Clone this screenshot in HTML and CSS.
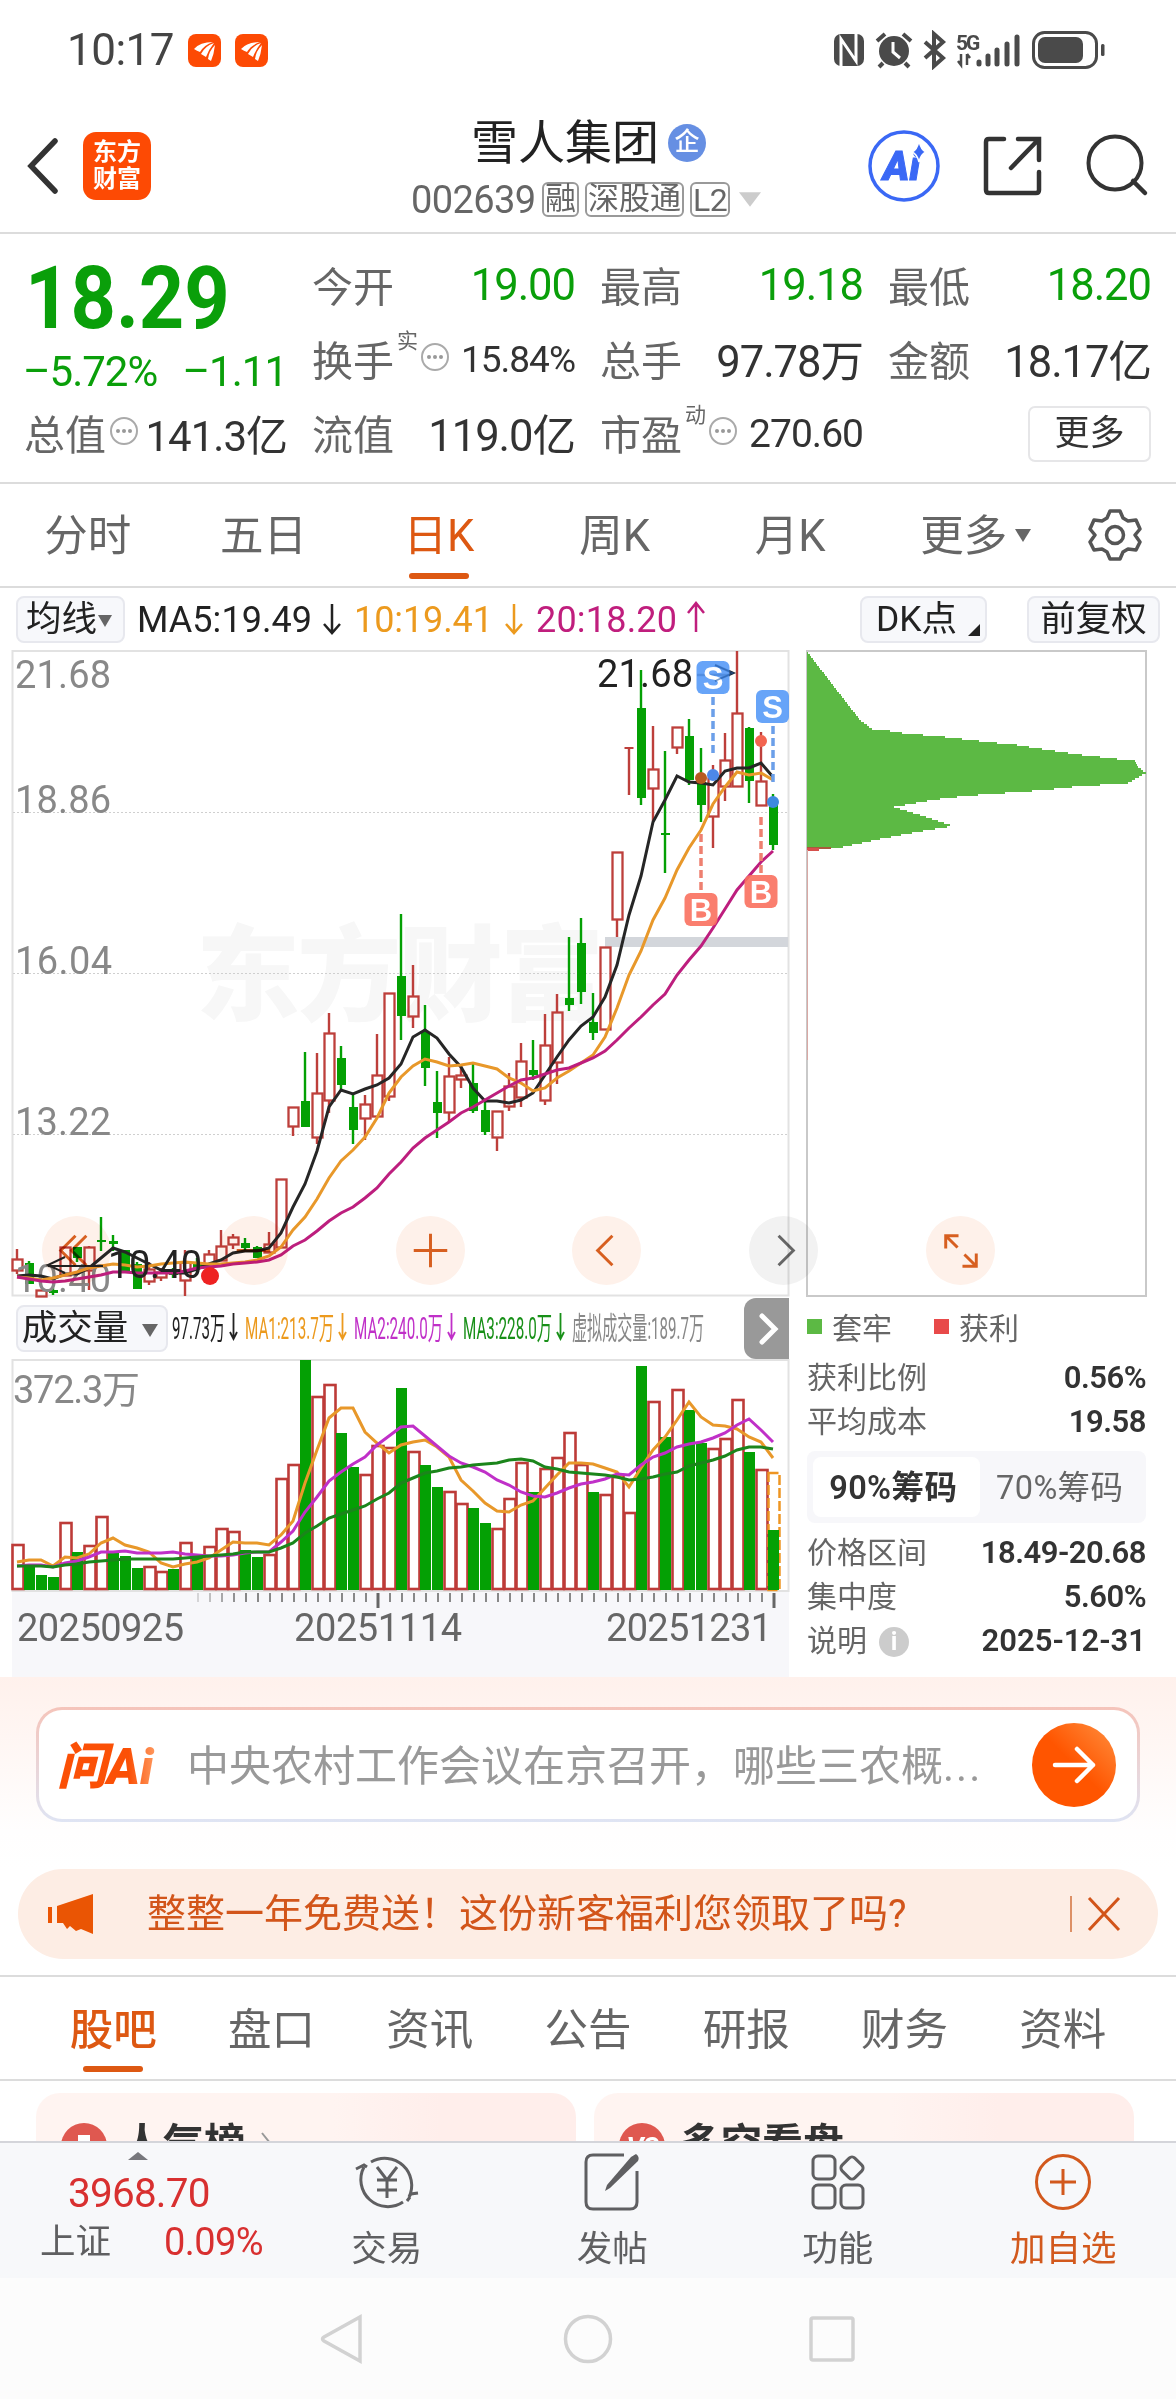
FILE: index.html
```html
<!DOCTYPE html>
<html lang="zh-CN">
<head>
    <meta charset="UTF-8">
    <meta name="viewport" content="width=device-width, initial-scale=1.0">
    <title>雪人集团 002639</title>
    <link rel="stylesheet" href="styles.css">
</head>
<body>
<div class="phone">
    <div class="status-bar">
        <span class="clock">10:17</span>
        <svg class="app-badge" viewBox="0 0 33 33"><rect width="33" height="33" rx="8" fill="#fd4a04"/><path d="M6 15Q12 8 25 8Q16 11 12 18Q9 17 6 15zM13 20Q17 12 26 9Q21 15 18 23zM20 25Q21 17 27 11Q26 20 23 27z" fill="#fff"/></svg>
        <svg class="app-badge" viewBox="0 0 33 33"><rect width="33" height="33" rx="8" fill="#fd4a04"/><path d="M6 15Q12 8 25 8Q16 11 12 18Q9 17 6 15zM13 20Q17 12 26 9Q21 15 18 23zM20 25Q21 17 27 11Q26 20 23 27z" fill="#fff"/></svg>
        <svg class="status-icons" viewBox="0 0 274 40">
            <g fill="#4a4a4a">
                <rect x="3" y="4" width="30" height="32" rx="7"/>
                <path d="M10 36V9L25 31V4" fill="none" stroke="#fff" stroke-width="3"/>
                <circle cx="63" cy="21" r="15"/>
                <path d="M46 11L54 4M80 11L72 4M52 33L48 37M74 33L78 37" stroke="#4a4a4a" stroke-width="4"/>
                <path d="M62 12V22L69 28" fill="none" stroke="#fff" stroke-width="3"/>
                <path d="M94 12L112 28L103 36V4L112 12L94 28" fill="none" stroke="#4a4a4a" stroke-width="4"/>
                <text x="125" y="20" class="net">5G</text>
                <path d="M130 24V35L127 31M136 24V35M136 24L139 28" fill="none" stroke="#4a4a4a" stroke-width="2.5"/>
                <path d="M148 34V32M157 34V26M166 34V20M176 34V14M186 34V7" stroke="#4a4a4a" stroke-width="5" stroke-linecap="round"/>
                <rect x="202.500" y="2.500" width="63" height="35" rx="11" fill="none" stroke="#4a4a4a" stroke-width="3"/>
                <rect x="207" y="7" width="45" height="26" rx="7"/>
                <rect x="270" y="14" width="3.500" height="12" rx="1.500"/>
            </g>
        </svg>
    </div>

    <header class="top">
        <svg class="back" viewBox="0 0 36 60"><path d="M30 5L6 30L30 55" fill="none" stroke="#333" stroke-width="5.500" stroke-linecap="round"/></svg>
        <div class="logo">东方<br>财富</div>
        <div class="stock">
            <div class="stock-name">雪人集团<i class="ent">企</i></div>
            <div class="stock-code"><span class="code">002639</span><b>融</b><b>深股通</b><b>L2</b><svg viewBox="0 0 24 16"><path d="M0 0H24L12 16z" fill="#ccc"/></svg></div>
        </div>
        <svg class="top-icons" viewBox="0 0 290 80">
            <circle cx="37" cy="40" r="34" fill="#fff" stroke="#3a68f5" stroke-width="3.500"/>
            <text x="16" y="54" class="ai-text">Ai</text>
            <path d="M52 15Q54 24 59 26Q54 28 52 36Q50 28 45 26Q50 24 52 15z" fill="#3a68f5" stroke="#fff" stroke-width="1.500"/>
            <path d="M137 13H122Q119 13 119 16V64Q119 67 122 67H169Q172 67 172 64V46M151 13H172V34M171 14L144 42" fill="none" stroke="#333" stroke-width="4.500" stroke-linecap="round"/>
            <circle cx="248" cy="37" r="26.500" fill="none" stroke="#333" stroke-width="4"/>
            <path d="M266 55L278 67" stroke="#333" stroke-width="4.500" stroke-linecap="round"/>
        </svg>
    </header>

    <section class="quote">
        <div class="price">
            <div class="last"><span>18.29</span></div>
            <div class="chg"><span>–5.72%</span><span>–1.11</span></div>
        </div>
        <div class="cell"><label>今开</label><em class="green">19.00</em></div>
        <div class="cell"><label>最高</label><em class="green">19.18</em></div>
        <div class="cell"><label>最低</label><em class="green">18.20</em></div>
        <div class="cell"><label>换手<sup>实</sup></label><svg class="dots after-sup" viewBox="0 0 30 30"><use href="#dots"/></svg><em class="small">15.84%</em></div>
        <div class="cell"><label>总手</label><em>97.78万</em></div>
        <div class="cell"><label>金额</label><em>18.17亿</em></div>
        <div class="cell"><label>总值</label><svg class="dots" viewBox="0 0 30 30"><use href="#dots"/></svg><em class="mid">141.3亿</em></div>
        <div class="cell"><label>流值</label><em>119.0亿</em></div>
        <div class="cell"><label>市盈<sup>动</sup></label><svg class="dots after-sup" viewBox="0 0 30 30"><use href="#dots"/></svg><em class="mid2">270.60</em></div>
        <div class="cell"><a class="more">更多</a></div>
        <svg class="defs" width="0" height="0">
            <g id="dots"><circle cx="15" cy="15" r="13" fill="none" stroke="#aaa" stroke-width="2"/><circle cx="9" cy="15" r="2" fill="#999"/><circle cx="15" cy="15" r="2" fill="#999"/><circle cx="21" cy="15" r="2" fill="#999"/></g>
        </svg>
    </section>

    <nav class="period">
        <a>分时</a><a>五日</a><a class="on">日K</a><a>周K</a><a>月K</a><a>更多<i class="caret"></i></a>
        <div class="gear">
            <svg viewBox="0 0 54 54"><path d="M22 3H32L35 10L40 13L48 12L52 21L47 27L52 34L48 42L40 41L35 44L32 51H22L19 44L14 41L6 42L2 34L7 27L2 21L6 12L14 13L19 10z" fill="none" stroke="#555" stroke-width="3.500" stroke-linejoin="round"/><circle cx="27" cy="27" r="8.500" fill="none" stroke="#555" stroke-width="3.500"/></svg>
        </div>
    </nav>

    <div class="ma-row">
        <a class="chip c1">均线<i class="caret"></i></a>
        <svg class="ma-text" viewBox="0 0 600 60">
            <text x="1" y="43" textLength="175" fill="#222">MA5:19.49</text><path d="M196 15V43M188 35L196 44L204 35" stroke="#222"/>
            <text x="218" y="43" textLength="139" fill="#ec9a1e">10:19.41</text><path d="M378 15V43M370 35L378 44L386 35" stroke="#ec9a1e"/>
            <text x="400" y="43" textLength="141" fill="#c01e7d">20:18.20</text><path d="M560 15V43M552 24L560 14L568 24" stroke="#c01e7d"/>
        </svg>
        <a class="chip c2">DK点<i class="corner"></i></a>
        <a class="chip c3">前复权</a>
    </div>

    <section class="charts">
        <div class="left">
            <svg id="kline" viewBox="0 650 800 648"></svg>
            <div class="vol-head">
                <a class="chip c4">成交量<i class="caret"></i></a>
                <svg class="vol-text" viewBox="168 0 576 61">
                    <text x="172" y="41" textLength="53" lengthAdjust="spacingAndGlyphs" fill="#222">97.73万</text>
                    <text x="245" y="41" textLength="89" lengthAdjust="spacingAndGlyphs" fill="#ec9a1e">MA1:213.7万</text>
                    <text x="354" y="41" textLength="89" lengthAdjust="spacingAndGlyphs" fill="#c030c8">MA2:240.0万</text>
                    <text x="463" y="41" textLength="89" lengthAdjust="spacingAndGlyphs" fill="#189018">MA3:228.0万</text>
                    <text x="572" y="41" textLength="132" lengthAdjust="spacingAndGlyphs" fill="#888">虚拟成交量:189.7万</text>
                    <path d="M233.500 15V40M230 34L233.500 41L237 34" stroke="#222"/>
                    <path d="M342.500 15V40M339 34L342.500 41L346 34" stroke="#ec9a1e"/>
                    <path d="M451.500 15V40M448 34L451.500 41L455 34" stroke="#c030c8"/>
                    <path d="M560.500 15V40M557 34L560.500 41L564 34" stroke="#189018"/>
                </svg>
                <a class="next"><svg viewBox="0 0 45 61"><path d="M18 18L31 31L18 44" fill="none" stroke="#fff" stroke-width="5" stroke-linecap="round"/></svg></a>
            </div>
            <svg id="volume" viewBox="0 1359 800 318"></svg>
        </div>
        <aside class="chips">
            <svg id="profile" viewBox="800 650 376 648"></svg>
            <div class="chips-info">
                <div class="legend"><i class="sq g"></i>套牢<i class="sq r"></i>获利</div>
                <div class="row"><span>获利比例</span><b>0.56%</b></div>
                <div class="row"><span>平均成本</span><b>19.58</b></div>
                <div class="toggle"><a class="on">90%筹码</a><a>70%筹码</a></div>
                <div class="row"><span>价格区间</span><b>18.49-20.68</b></div>
                <div class="row"><span>集中度</span><b>5.60%</b></div>
                <div class="row"><span>说明<i class="info">i</i></span><b class="date">2025-12-31</b></div>
            </div>
        </aside>
        <div class="tools">
            <a><svg viewBox="0 0 70 70"><path d="M34 20L19 35L34 50M45 20L30 35L45 50"/></svg></a>
            <a><svg viewBox="0 0 70 70"><path d="M18 35H52"/></svg></a>
            <a><svg viewBox="0 0 70 70"><path d="M18 35H52M35 18V52"/></svg></a>
            <a><svg viewBox="0 0 70 70"><path d="M41 20L26 35L41 50"/></svg></a>
            <a class="off"><svg viewBox="0 0 70 70"><path d="M30 20L45 35L30 50"/></svg></a>
            <a><svg viewBox="0 0 70 70"><path d="M33 20H20V33M20 20L32 32M51 38V51H37M39 39L51 51" stroke-width="3.500"/></svg></a>
        </div>
    </section>

    <section class="ask">
        <div class="ask-box">
            <div class="ask-logo"><span>问</span>Ai</div>
            <p>中央农村工作会议在京召开，哪些三农概<span class="more-dots">...</span></p>
            <a class="go"><svg viewBox="0 0 84 84"><path d="M23 42H61M45 26L61 42L45 58" fill="none" stroke="#fff" stroke-width="4.500" stroke-linecap="round" stroke-linejoin="round"/></svg></a>
        </div>
    </section>

    <div class="banner">
        <svg class="horn" viewBox="0 0 48 42"><path d="M0 14H4V30H0zM9 13L45 1V41L33 36L28 38L22 33L19 36L15 30H9z" fill="#ea5504"/></svg>
        <p>整整一年免费送！这份新客福利您领取了吗?</p>
        <svg class="close" viewBox="0 0 54 40"><path d="M1 2V38" stroke="#d2703c" stroke-width="1.500"/><path d="M19 4L49 36M49 4L19 36" stroke="#d2551a" stroke-width="3"/></svg>
    </div>

    <nav class="tabs">
        <a class="on">股吧</a><a>盘口</a><a>资讯</a><a>公告</a><a>研报</a><a>财务</a><a>资料</a>
    </nav>

    <section class="cards">
        <div class="card"><i class="round hot"></i>人气榜<svg viewBox="0 0 12 30"><path d="M2 5L10 15L2 25" fill="none" stroke="#999" stroke-width="2"/></svg></div>
        <div class="card"><i class="round">VS</i>多空看盘</div>
    </section>

    <footer class="bottom">
        <div class="index">
            <i class="up"></i>
            <div class="idx-val">3968.70</div>
            <div class="idx-row"><span>上证</span><b>0.09%</b></div>
        </div>
        <a><svg viewBox="0 0 66 62"><path d="M17 11A27 27 0 0 1 55 46M49 51A27 27 0 0 1 10 16M2 18L10 14L13 16M55 46L57 43L64 42M53 50L56 46"/><path d="M23 16L33 29L43 16M33 29V47M23 29H43M23 39H43"/></svg>交易</a>
        <a><svg viewBox="0 0 66 62"><path d="M45 4H14Q7 4 7 11V51Q7 58 14 58H51Q58 58 58 51V20"/><path d="M57 3Q61 6 59 10L31 37L26 40L28 34L52 6z" fill="#5f5f61" stroke="none"/></svg>发帖</a>
        <a><svg viewBox="0 0 66 62"><rect x="8" y="5" width="22" height="23" rx="5"/><rect x="8" y="34" width="22" height="23" rx="5"/><rect x="36" y="34" width="22" height="23" rx="5"/><rect x="38" y="8" width="18" height="18" rx="4" transform="rotate(45 47 17)"/></svg>功能</a>
        <a class="add"><svg viewBox="0 0 66 62"><circle cx="33" cy="31" r="26.500"/><path d="M20 31H46M33 18V44"/></svg>加自选</a>
    </footer>

    <div class="sys-nav">
        <svg viewBox="0 0 50 60"><path d="M41 8V52L5 32Q2 30 5 28z"/></svg>
        <svg viewBox="0 0 50 60"><circle cx="25" cy="30" r="22.500"/></svg>
        <svg viewBox="0 0 50 60"><rect x="4" y="9" width="42" height="42" rx="2"/></svg>
    </div>
</div>
<script src="chart.js"></script>
</body>
</html>
```
FILE: styles.css
```css
* {
    box-sizing: border-box;
}
body {
    margin: 0;
    background: #fff;
    color: #333;
    font-family: Roboto, "Noto Sans CJK SC", sans-serif;
}
svg {
    display: block;
    flex: none;
}
i, em {
    font-style: normal;
}
p {
    margin: 0;
}
.phone {
    width: 1176px;
    height: 2400px;
    overflow: hidden;
    display: flex;
    flex-direction: column;
}
.phone > * {
    flex: none;
}

/* status bar */
.status-bar {
    height: 100px;
    padding: 0 71px 0 67px;
    display: flex;
    align-items: center;
}
.clock {
    font-size: 44px;
    letter-spacing: -0.5px;
    width: 121px;
    color: #444;
}
.app-badge {
    width: 33px;
    height: 33px;
    margin-right: 14px;
}
.status-icons {
    width: 274px;
    height: 40px;
    margin-left: auto;
}
.net {
    font-size: 21px;
    font-weight: 700;
    letter-spacing: -2px;
}

/* header */
.top {
    height: 134px;
    border-bottom: 2px solid #dcdcdc;
    display: flex;
    align-items: center;
    position: relative;
    padding-left: 25px;
}
.back {
    width: 36px;
    height: 60px;
    margin-right: 22px;
}
.logo {
    width: 68px;
    height: 68px;
    border-radius: 13px;
    background: #fd4a04;
    color: #fff;
    font-size: 24px;
    font-weight: 700;
    line-height: 27px;
    text-align: center;
    padding-top: 7px;
}
.stock {
    flex: 1;
    padding-left: 260px;
    white-space: nowrap;
}
.stock-name {
    font-size: 47px;
    line-height: 54px;
    height: 56px;
    padding-left: 60px;
    display: flex;
    align-items: center;
    color: #222;
}
.ent {
    width: 38px;
    height: 38px;
    margin-left: 9px;
    border-radius: 50%;
    background: #668fe3;
    color: #fff;
    font-size: 25px;
    font-weight: 500;
    line-height: 36px;
    text-align: center;
}
.stock-code {
    display: flex;
    align-items: center;
    height: 36px;
    margin-top: 11px;
    color: #666;
}
.code {
    font-size: 38px;
    letter-spacing: -0.6px;
    width: 131px;
}
.stock-code b {
    height: 35px;
    border: 2px solid #999;
    border-radius: 6px;
    font-weight: 400;
    font-size: 31px;
    line-height: 29px;
    padding: 0 1px;
    margin-right: 6px;
}
.stock-code b:last-of-type {
    font-size: 32px;
    line-height: 32px;
    margin-right: 9px;
    padding: 0 1px;
    letter-spacing: -0.5px;
}
.stock-code svg {
    width: 22px;
    height: 15px;
}
.top-icons {
    position: absolute;
    right: 19px;
    top: 26px;
    width: 290px;
    height: 80px;
}
.ai-text {
    font-size: 40px;
    font-weight: 900;
    font-style: italic;
    fill: #3a68f5;
    stroke: #3a68f5;
    stroke-width: 1;
}

/* quote */
.quote {
    height: 250px;
    border-bottom: 2px solid #dcdcdc;
    padding: 13px 25px 0;
    display: grid;
    grid-template-columns: repeat(4, 262px);
    grid-template-rows: repeat(3, 74px);
    column-gap: 26px;
}
.price {
    grid-row: 1 / 3;
    color: #0a9f0a;
}
.last {
    height: 94px;
    line-height: 102px;
    font-size: 88px;
    font-weight: 700;
}
.last span {
    display: inline-block;
    transform: scaleX(0.9);
    transform-origin: 0 50%;
}
.chg {
    display: flex;
    justify-content: space-between;
    font-size: 42px;
    line-height: 62px;
    letter-spacing: -1px;
    margin-left: -2px;
}
.cell {
    display: flex;
    align-items: center;
    white-space: nowrap;
    position: relative;
}
.cell label {
    font-size: 41px;
    color: #666;
    position: relative;
    margin-left: -1px;
}
.cell sup {
    position: absolute;
    left: 85px;
    top: 1px;
    font-size: 21px;
    line-height: 24px;
}
.cell em {
    margin-left: auto;
    font-size: 43.5px;
    letter-spacing: -1px;
    color: #333;
}
.cell em.green {
    color: #0a9f0a;
    margin-top: 2px;
}
.cell em.small {
    font-size: 37px;
    margin-top: 3px;
}
.cell em.mid {
    font-size: 42px;
}
.cell em.mid2 {
    font-size: 39px;
    margin-top: 4px;
}
.dots {
    width: 30px;
    height: 30px;
    margin: -2px 0 0 3px;
}
.dots.after-sup {
    margin-left: 26px;
}
.defs {
    position: absolute;
}
.more {
    margin-left: auto;
    margin-top: 4px;
    width: 123px;
    height: 56px;
    border: 2px solid #e6e6e8;
    border-radius: 7px;
    text-align: center;
    font-size: 35px;
    line-height: 52px;
}

/* period tabs */
.period {
    height: 104px;
    border-bottom: 2px solid #dcdcdc;
    display: flex;
}
.period > a {
    width: 175.600px;
    text-align: center;
    font-size: 43.5px;
    line-height: 106px;
    color: #666;
    position: relative;
    white-space: nowrap;
}
.period > a:nth-child(6) {
    padding-left: 20px;
}
.period > a.on, .tabs a.on {
    color: #dd5812;
}
.period > a.on::after, .tabs a.on::after {
    content: "";
    position: absolute;
    left: 50%;
    bottom: 7px;
    width: 60px;
    height: 6px;
    margin-left: -30px;
    border-radius: 3px;
    background: #dd5812;
}
.tabs a.on {
    font-weight: 500;
}
.caret {
    display: inline-block;
    border: 8px solid transparent;
    border-top: 13px solid #666;
    border-bottom: 0;
    vertical-align: middle;
}
.period .caret {
    margin: 0 0 8px 8px;
}
.gear {
    flex: 1;
    display: flex;
    align-items: center;
    justify-content: center;
}
.gear svg {
    width: 54px;
    height: 54px;
}

/* MA row */
.ma-row {
    height: 62px;
    display: flex;
    align-items: center;
    padding: 0 16px;
    position: relative;
}
.chip {
    height: 47px;
    border: 2px solid #e7e8ee;
    border-radius: 8px;
    background: #f7f8fb;
    color: #222;
    font-size: 35.5px;
    line-height: 43px;
    text-align: center;
    white-space: nowrap;
    position: relative;
}
.c1 {
    width: 109px;
    padding-right: 3px;
}
.c1 .caret {
    border-width: 12px 7px 0;
    margin-left: 1px;
}
.ma-text {
    width: 600px;
    height: 60px;
    margin-left: 11px;
}
.ma-text text {
    font-size: 36px;
}
.ma-text path, .vol-text path {
    fill: none;
    stroke-width: 2.5;
}
.vol-text path {
    stroke-width: 1.8;
}
.c2 {
    width: 127px;
    margin-left: auto;
    padding-right: 14px;
}
.corner {
    position: absolute;
    right: 5px;
    bottom: 5px;
    border-left: 12px solid transparent;
    border-bottom: 12px solid #222;
}
.c3 {
    width: 133px;
    margin-left: 40px;
}

/* charts */
.charts {
    height: 1027px;
    display: flex;
    position: relative;
}
.left {
    width: 800px;
}
#kline, #volume {
    width: 800px;
}
.vol-head {
    height: 61px;
    display: flex;
    align-items: center;
    padding-left: 16px;
}
.c4 {
    width: 152px;
    padding-right: 4px;
}
.c4 .caret {
    margin-left: 14px;
}
.vol-text {
    width: 576px;
    height: 61px;
}
.vol-text text {
    font-size: 31px;
}
.next {
    width: 45px;
    height: 61px;
    border-radius: 12px 0 0 12px;
    background: #999;
}
.chips {
    width: 376px;
}
#profile {
    width: 376px;
    height: 648px;
}
.chips-info {
    padding: 6px 30px 0 7px;
    font-size: 30px;
    color: #666;
}
.legend {
    display: flex;
    align-items: center;
    height: 44px;
}
.sq {
    width: 15px;
    height: 15px;
    margin-right: 10px;
}
.sq.g {
    background: #5cb944;
}
.sq.r {
    background: #e84a4a;
    margin-left: 42px;
}
.row {
    display: flex;
    justify-content: space-between;
    align-items: center;
    height: 44px;
    line-height: 44px;
}
.legend + .row {
    margin-top: 8px;
}
.row b {
    font-weight: 600;
    font-size: 31px;
    color: #333;
    letter-spacing: -0.5px;
}
.row b.date {
    letter-spacing: 0;
}
.toggle {
    display: flex;
    height: 72px;
    margin: 7px 0 8px;
    padding: 6px;
    border-radius: 8px;
    background: #f7f7fa;
}
.toggle a {
    flex: 1;
    border-radius: 8px;
    text-align: center;
    font-size: 32.5px;
    line-height: 62px;
    letter-spacing: 0.4px;
}
.toggle a.on {
    background: #fff;
    color: #333;
    font-weight: 600;
    padding-right: 6px;
}
.info {
    display: inline-block;
    width: 30px;
    height: 30px;
    margin-left: 12px;
    border-radius: 50%;
    background: #ccc;
    color: #fff;
    font-size: 25px;
    font-weight: 700;
    line-height: 29px;
    text-align: center;
    vertical-align: 1px;
}
.tools {
    position: absolute;
    left: 42px;
    top: 566px;
    display: flex;
    gap: 107.800px;
}
.tools a {
    width: 69px;
    height: 69px;
    border-radius: 50%;
    background: #fef1ea;
    mix-blend-mode: multiply;
}
.tools a.off {
    background: #f2f2f2;
}
.tools path {
    fill: none;
    stroke: #d75f20;
    stroke-width: 3;
}
.tools .off path {
    stroke: #666;
}
.axis {
    font-size: 38px;
}
.watermark {
    font-size: 104px;
    font-weight: 900;
    fill: #f7f7f7;
}
.mark {
    font-family: "Liberation Sans", sans-serif;
    font-size: 31px;
    font-weight: 700;
    fill: #fff;
    text-anchor: middle;
}

/* ask ai */
.ask {
    height: 192px;
    padding: 30px 36px 0;
    background: linear-gradient(#fff1ec, #fffefe 80%, #fff);
}
.ask-box {
    height: 115px;
    border: 3px solid transparent;
    border-radius: 26px;
    background: linear-gradient(#fff, #fff) padding-box, linear-gradient(#f5c4ba, #dfe4f3) border-box;
    display: flex;
    align-items: center;
    padding: 0 21px 0 18px;
}
.ask-logo {
    width: 130px;
    font-size: 50px;
    font-weight: 900;
    font-style: italic;
    margin-top: -6px;
    white-space: nowrap;
    color: transparent;
    background: linear-gradient(90deg, #fb5006 55%, #ff9a60 76%);
    -webkit-background-clip: text;
    background-clip: text;
}
.ask-box p {
    flex: 1;
    margin-top: -5px;
    font-size: 42px;
    color: #999;
    white-space: nowrap;
}
.more-dots {
    letter-spacing: 2px;
}
.go {
    width: 84px;
    height: 84px;
    border-radius: 50%;
    background: linear-gradient(45deg, #ff5500 50%, #ff9040);
}

/* banner */
.banner {
    height: 90px;
    margin: 0 18px 16px;
    border-radius: 45px;
    background: #fdede4;
    display: flex;
    align-items: center;
    padding: 0 34px 0 30px;
}
.horn {
    width: 48px;
    height: 42px;
}
.banner p {
    flex: 1;
    margin: -8px 0 0 51px;
    font-size: 39px;
    color: #d2551a;
    white-space: nowrap;
}
.close {
    width: 54px;
    height: 40px;
}

/* section tabs */
.tabs {
    height: 106px;
    border-top: 2px solid #dcdcdc;
    border-bottom: 2px solid #dcdcdc;
    padding: 0 34px;
    display: flex;
}
.tabs a {
    flex: 1;
    text-align: center;
    font-size: 43.5px;
    line-height: 107px;
    height: 102px;
    color: #666;
    position: relative;
}
.cards {
    height: 60px;
    overflow: hidden;
    display: flex;
    gap: 18px;
    padding: 12px 42px 0 36px;
}
.card {
    flex: 1;
    height: 140px;
    border-radius: 24px;
    background: linear-gradient(90deg, #fff4f1 55%, #ffeeeb 75%);
    display: flex;
    align-items: flex-start;
    padding: 25px 25px;
    font-size: 41px;
    font-weight: 700;
    line-height: 52px;
}
.card svg {
    width: 12px;
    height: 30px;
    margin: 10px 0 0 15px;
}
.round {
    width: 46px;
    height: 46px;
    margin: 5px 15px 0 0;
    border-radius: 50%;
    background: #df5850;
    color: #fff;
    font-size: 27px;
    line-height: 50px;
    letter-spacing: -1px;
    font-style: italic;
    text-align: center;
}
.round.hot::before {
    content: "";
    display: block;
    width: 12px;
    height: 30px;
    margin: 12px auto 0;
    background: #fff;
}

/* bottom bar */
.bottom {
    height: 137px;
    border-top: 2px solid #d4d5da;
    background: #f7f8fa;
    display: flex;
    color: #5f5f61;
}
.index {
    width: 274px;
    color: #d83030;
    position: relative;
}
.up {
    position: absolute;
    left: 128px;
    top: 9px;
    border: 10px solid transparent;
    border-bottom: 8px solid #77777c;
    border-top: 0;
}
.idx-val {
    padding: 27px 0 0 68px;
    font-size: 40.5px;
    line-height: 46px;
    letter-spacing: -0.8px;
}
.idx-row {
    display: flex;
    align-items: center;
    justify-content: space-between;
    padding: 2px 11px 0 40px;
    font-size: 35.5px;
    line-height: 48px;
}
.idx-row span {
    color: #5f5f61;
}
.idx-row b {
    font-weight: 400;
    font-size: 38px;
    letter-spacing: -0.6px;
}
.bottom a {
    width: 225.500px;
    display: flex;
    flex-direction: column;
    align-items: center;
    padding-top: 8px;
    font-size: 35.5px;
    line-height: 72px;
}
.bottom a svg {
    width: 66px;
    height: 62px;
    fill: none;
    stroke: #5f5f61;
    stroke-width: 3;
}
.bottom a.add {
    color: #d2591d;
}
.bottom a.add svg {
    stroke: #d2591d;
}
.sys-nav {
    height: 121px;
    background: #fcfcfc;
    display: flex;
    justify-content: center;
    align-items: center;
    gap: 194px;
}
.sys-nav svg {
    width: 50px;
    height: 60px;
    fill: none;
    stroke: #d2d2d2;
    stroke-width: 3.5;
}
```
FILE: chart.js
```js
var RED = '#bd3f3b', GREEN = '#04a004';
var STEP = 12, X0 = 17;

// high, body top, body bottom, low, up(1)/down(0), volume top
var bars = [
    [1249,1259,1270,1274,1,1545],[1261,1263,1284,1284,0,1566],[1290,1290,1296,1296,1,1575],[1288,1290,1293,1295,0,1577],
    [1247,1247,1275,1275,1,1523],[1247,1247,1258,1262,0,1552],[1246,1247,1270,1290,1,1546],[1217,1240,1241,1251,0,1517],
    [1235,1241,1244,1251,0,1553],[1250,1250,1271,1271,0,1556],[1262,1264,1289,1289,0,1568],[1262,1269,1281,1285,1,1567],
    [1268,1272,1277,1281,1,1572],[1268,1271,1275,1278,0,1569],[1250,1262,1280,1296,1,1543],[1258,1262,1268,1272,0,1555],
    [1250,1254,1266,1266,1,1547],[1230,1246,1260,1260,1,1529],[1234,1237,1244,1249,1,1532],[1238,1243,1248,1250,0,1550],
    [1246,1247,1258,1258,0,1557],[1232,1244,1252,1252,1,1555],[1179,1179,1247,1247,1,1479],[1107,1107,1126,1136,1,1465],
    [1052,1101,1127,1127,0,1360],[1053,1093,1137,1144,1,1397],[1013,1033,1100,1113,1,1385],[1046,1058,1085,1089,0,1433],
    [1095,1107,1130,1144,0,1467],[1095,1104,1118,1140,1,1475],[1034,1075,1116,1116,1,1446],[993,993,1096,1101,1,1448],
    [914,976,1016,1040,0,1388],[965,996,1016,1028,1,1452],[1005,1032,1068,1086,0,1465],[1071,1102,1113,1138,0,1487],
    [1057,1076,1112,1122,1,1492],[1065,1075,1079,1088,1,1504],[1062,1083,1111,1113,0,1508],[1102,1110,1132,1135,0,1523],
    [1111,1111,1137,1151,1,1529],[1073,1086,1106,1111,1,1499],[1043,1061,1097,1107,1,1463],[1040,1070,1075,1080,0,1492],
    [1014,1045,1100,1105,1,1469],[994,1012,1062,1084,1,1458],[937,998,1005,1011,0,1433],[918,943,992,1004,0,1465],
    [993,1022,1033,1040,0,1492],[947,947,1029,1029,1,1495],[852,852,919,937,1,1477],[748,748,748,795,1,1513],
    [670,708,798,805,0,1366],[726,769,788,821,1,1402],[751,833,834,873,0,1437],[727,727,747,754,1,1390],
    [719,736,780,785,0,1410],[748,782,805,822,0,1443],[765,778,816,848,1,1449],[733,760,786,801,1,1439],
    [651,713,786,787,1,1400],[727,728,781,803,0,1452],[732,781,805,805,1,1470],[794,803,845,850,0,1530]
];
// days where the volume bar colour differs from the candle
var volUp = { 2: 0, 7: 1, 46: 1, 47: 1 };

var ma5 = [1276,1275,1276,1279,1274,1274,1268,1258,1248,1252,1258,1264,1270,1273,1273,1269,1264,1260,1253,1251,1251,1248,1233,1207,1184,1151,1107,1090,1094,1089,1085,1078,1064,1037,1030,1038,1054,1067,1088,1101,1101,1103,1100,1093,1075,1057,1040,1026,1017,997,965,915,876,822,800,776,782,783,785,771,768,768,763,777];
var ma10 = [1277,1278,1280,1278,1275,1272,1268,1266,1264,1265,1267,1266,1264,1263,1262,1263,1264,1264,1263,1262,1260,1256,1247,1230,1217,1199,1178,1161,1150,1137,1118,1093,1077,1066,1059,1062,1066,1065,1063,1066,1069,1078,1083,1091,1088,1078,1071,1063,1055,1037,1008,975,951,920,898,870,848,830,804,787,772,775,773,780];
var ma20 = [1277,1279,1281,1282,1281,1279,1277,1275,1272,1272,1273,1273,1273,1273,1271,1268,1267,1266,1264,1263,1262,1260,1255,1246,1240,1231,1221,1213,1207,1198,1188,1174,1162,1148,1138,1130,1122,1113,1107,1100,1093,1086,1080,1078,1074,1070,1068,1063,1058,1051,1040,1028,1017,1005,994,975,960,946,928,909,890,876,862,851];
var vol5 = [1562,1560,1560,1566,1557,1558,1554,1543,1538,1545,1548,1552,1563,1567,1564,1562,1558,1550,1542,1543,1543,1545,1535,1521,1483,1450,1418,1408,1408,1432,1443,1453,1445,1442,1440,1447,1457,1480,1491,1503,1511,1512,1505,1501,1488,1475,1463,1463,1464,1468,1472,1487,1468,1450,1437,1420,1402,1417,1425,1426,1429,1437,1442,1458];
var vol10 = [1566,1565,1565,1567,1563,1561,1557,1552,1552,1551,1553,1553,1553,1552,1554,1555,1556,1556,1555,1553,1552,1552,1542,1531,1512,1497,1481,1472,1464,1457,1445,1436,1427,1426,1436,1446,1456,1463,1467,1472,1480,1485,1492,1496,1497,1493,1488,1484,1482,1479,1474,1475,1465,1457,1453,1447,1444,1442,1438,1433,1425,1419,1430,1442];
var vol20 = [1566,1566,1566,1567,1565,1564,1562,1561,1560,1559,1559,1559,1559,1559,1558,1557,1556,1555,1554,1552,1552,1552,1548,1543,1533,1526,1518,1514,1510,1506,1499,1493,1483,1478,1473,1471,1468,1467,1465,1464,1463,1460,1459,1461,1467,1469,1472,1473,1474,1475,1477,1480,1479,1477,1474,1472,1466,1463,1460,1456,1450,1447,1447,1449];

function x(i) { return X0 + i * STEP; }
function rect(l, t, w, h, attrs) {
    return '<rect x="' + l + '" y="' + t + '" width="' + w + '" height="' + h + '" ' + attrs + '/>';
}
function line(x1, y1, x2, y2, color, w, extra) {
    return '<line x1="' + x1 + '" y1="' + y1 + '" x2="' + x2 + '" y2="' + y2 + '" stroke="' + color + '" stroke-width="' + w + '" ' + (extra || '') + '/>';
}
function poly(ys, color) {
    var pts = ys.map(function (y, i) { return x(i) + ',' + y; }).join(' ');
    return '<polyline points="' + pts + '" fill="none" stroke="' + color + '" stroke-width="3"/>';
}
function label(tx, ty, w, color, s) {
    return '<text class="axis" x="' + tx + '" y="' + ty + '" textLength="' + w + '" fill="' + color + '">' + s + '</text>';
}
function dot(cx, cy, r, color) {
    return '<circle cx="' + cx + '" cy="' + cy + '" r="' + r + '" fill="' + color + '"/>';
}
function mark(cx, top, letter, color) {
    return rect(cx - 16.5, top, 33, 33, 'rx="6" fill="' + color + '" fill-opacity="0.9"') +
        '<text class="mark" x="' + cx + '" y="' + (top + 28) + '">' + letter + '</text>';
}

function drawKline() {
    var s = '<text class="watermark" x="196" y="1013" textLength="408">东方财富</text>';
    s += rect(12.5, 651, 776, 644.5, 'fill="none" stroke="#e2e2e2" stroke-width="2"');
    [813, 974, 1135].forEach(function (y) {
        s += line(13, y - 0.5, 788, y - 0.5, '#cfcfcf', 1, 'stroke-dasharray="2 2"');
    });
    s += rect(605, 937, 183, 10, 'fill="#d3d6db"');
    bars.forEach(function (b, i) {
        var c = b[4] ? RED : GREEN, cx = x(i);
        if (b[4]) {
            s += line(cx, b[0], cx, b[1], c, 2.4) + line(cx, b[2], cx, b[3], c, 2.4);
            s += b[1] === b[2] ? line(cx - 4.5, b[1], cx + 4.5, b[1], c, 2)
                : rect(cx - 4.5, b[1] + 0.5, 10, b[2] - b[1], 'fill="none" stroke="' + c + '" stroke-width="2.3"');
        } else {
            s += line(cx, b[0], cx, b[3], c, 2.4) + rect(cx - 4, b[1], 9, Math.max(b[2] - b[1], 2), 'fill="' + c + '"');
        }
    });
    s += label(15, 688, 96, '#888', '21.68') + label(15, 813, 96, '#888', '18.86') + label(15, 974, 97, '#888', '16.04') +
        label(15, 1135, 96, '#888', '13.22') + label(15, 1292, 96, '#888', '10.40');
    s += poly(ma5, '#262626') + poly(ma10, '#e8982a') + poly(ma20, '#bd1e7e');
    s += label(597, 687, 96, '#222', '21.68') + label(108, 1278, 94, '#222', '10.40');
    s += '<path d="M103 1266H48M65 1257L48 1265L65 1273" fill="none" stroke="#222" stroke-width="2"/>';
    s += dot(210, 1276, 9, '#ee2222');
    s += line(713, 697, 713, 753, '#6b9fe9', 3.5, 'stroke-dasharray="8 4"') + line(773, 726, 773, 782, '#6b9fe9', 3.5, 'stroke-dasharray="8 4"');
    s += line(701, 834, 701, 890, '#ee8070', 3.5, 'stroke-dasharray="8 4"') + line(761, 817, 761, 873, '#ee8070', 3.5, 'stroke-dasharray="8 4"');
    s += '<path d="M697 675H730M715 665L733 673L715 681" fill="none" stroke="#222" stroke-width="2.5"/>';
    s += mark(713, 661, 'S', '#579af7') + mark(772.5, 690, 'S', '#579af7') + mark(701, 893, 'B', '#fa705e') + mark(761, 875, 'B', '#fa705e');
    s += '<path d="M715 665L733 673L715 681" fill="none" stroke="#1f5aa8" stroke-width="1.5" stroke-opacity="0.6"/>';
    s += dot(701, 778, 6, '#b85a20') + dot(713, 775, 6, '#4d88e8') + dot(761, 741, 6, '#f36450') + dot(773, 802, 6, '#3e8ae0');
    document.getElementById('kline').innerHTML = s;
}

function drawVolume() {
    var s = rect(12, 1591, 777, 86, 'fill="#f7f7fa"');
    s += rect(12.5, 1360, 776, 231, 'fill="none" stroke="#e2e2e2" stroke-width="2"');
    s += label(13, 1403, 127, '#888', '372.3万');
    bars.forEach(function (b, i) {
        var up = i in volUp ? volUp[i] : b[4], l = x(i) - 5;
        if (up) {
            s += rect(l + 0.5, b[5], 11, 1589 - b[5], 'fill="#fff" stroke="#bd3b38" stroke-width="2.6"');
        } else {
            if (i === bars.length - 1) {
                s += rect(l + 0.5, 1473, 11, 117, 'fill="none" stroke="#ee9522" stroke-width="2.5" stroke-dasharray="10 3"');
            }
            s += rect(l, b[5], 11, 1590 - b[5], 'fill="' + GREEN + '"');
        }
    });
    s += poly(vol5, '#e8982a') + poly(vol10, '#c030c8') + poly(vol20, '#1b851b');
    for (var i = 0; i < 49; i++) {
        var tx = 198 + i * STEP, big = tx === 378 || tx === 774;
        s += line(tx, 1593, tx, big ? 1608 : 1602, big ? '#666' : '#888', big ? 3 : 2, 'opacity="' + Math.min(1, 0.3 + i * 0.2) + '"');
    }
    s += label(17, 1641, 167, '#666', '20250925') + label(294, 1641, 168, '#666', '20251114') + label(606, 1641, 166, '#666', '20251231');
    document.getElementById('volume').innerHTML = s;
}

// cost distribution outline, [right edge, y]
var cost = [[808,652],[860,719],[873,729],[890,730],[908,733],[937,735],[962,738],[987,741],[1017,744],[1048,749],[1082,754],[1117,758],[1135,760],[1138,766],[1146,772],[1128,782],[1100,784],[1072,786],[1045,789],[1018,791],[965,795],[932,799],[894,806],[923,815],[953,825],[917,831],[880,838],[843,846],[831,847]];

// the distribution is made of thin horizontal bars, 2px each
function drawProfile() {
    var s = rect(807, 651, 339, 645, 'fill="none" stroke="#c9c9c9" stroke-width="2"');
    var k = 0;
    for (var y = 652; y < 847; y += 2) {
        while (k < cost.length - 2 && cost[k + 1][1] < y) k++;
        var a = cost[k], b = cost[k + 1];
        var right = a[0] + (b[0] - a[0]) * (y - a[1]) / (b[1] - a[1]);
        s += rect(807, y, Math.round(right - 807), 2, 'fill="#5cb944" shape-rendering="crispEdges"');
    }
    s += rect(807, 847, 24, 2, 'fill="#a85a3c"') + rect(807, 848, 12, 3, 'fill="#d6504c"');
    s += line(807.5, 850, 807.5, 1060, '#d9a8a4', 1);
    document.getElementById('profile').innerHTML = s;
}

drawKline();
drawVolume();
drawProfile();
```
